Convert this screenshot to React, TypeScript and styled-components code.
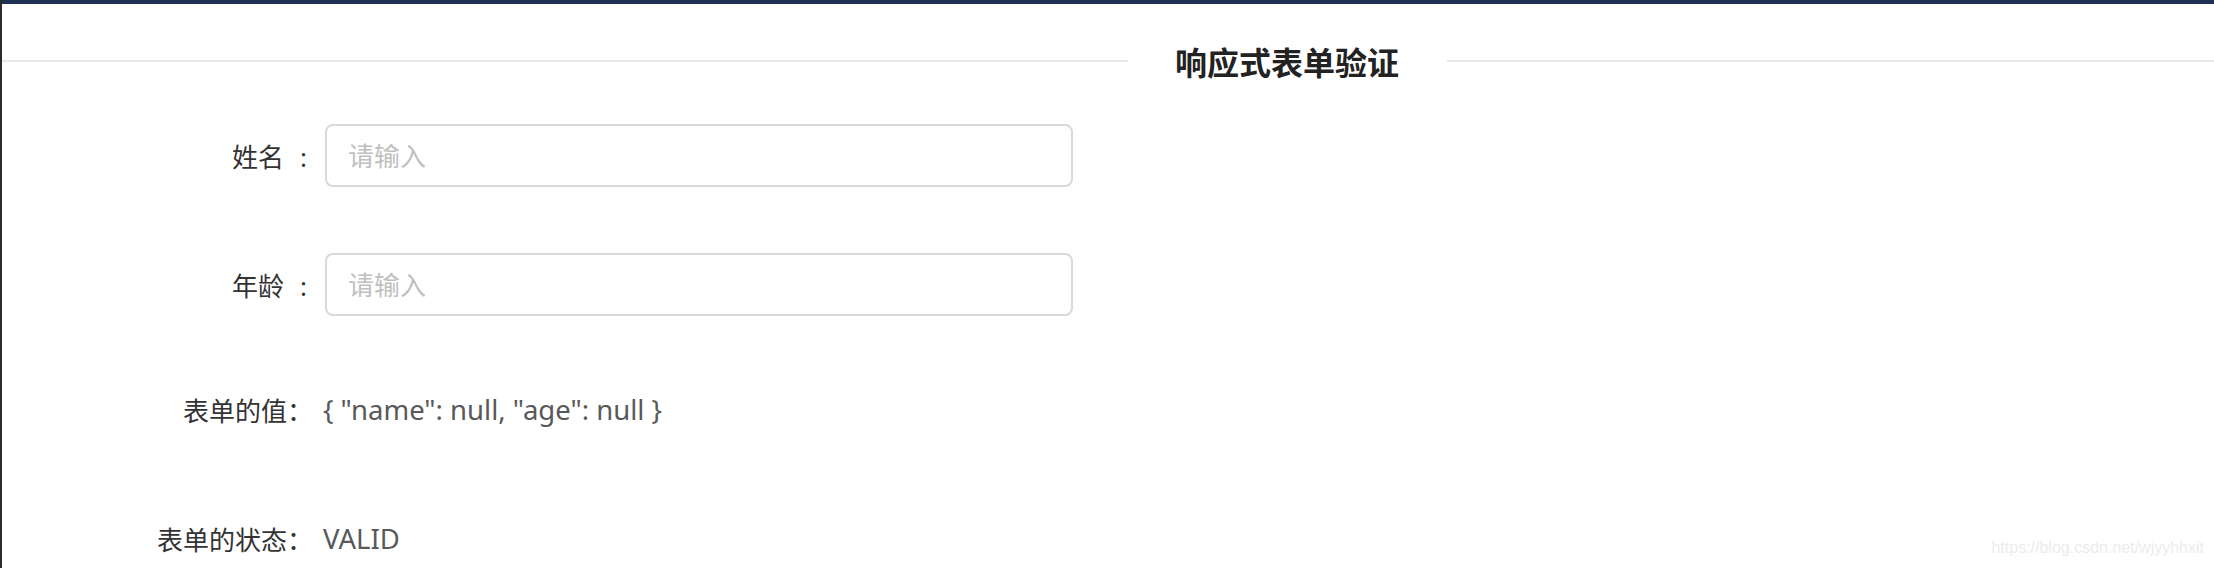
import styled, { createGlobalStyle } from "styled-components";

const GlobalStyle = createGlobalStyle`
  html, body {
    margin: 0;
    padding: 0;
    background: #fff;
  }
  body {
    font-family: "Noto Sans", "Noto Sans CJK SC", sans-serif;
    overflow: hidden;
  }
`;

export default function App() {
  return (
    <>
      <GlobalStyle />
      <Page>
        <TopBar />
        <Heading>
          <Rule />
          <Title>响应式表单验证</Title>
          <Rule $grow />
        </Heading>

        <Form>
          <FormItem $label={305} $gap={18}>
            <Label $colon>姓名</Label>
            <Input placeholder="请输入" />
          </FormItem>
          <FormItem $label={305} $gap={18}>
            <Label $colon>年龄</Label>
            <Input placeholder="请输入" />
          </FormItem>
          <FormItem $label={311} $gap={10} $offset={-4}>
            <Label>表单的值：</Label>
            <Value>{'{ "name": null, "age": null }'}</Value>
          </FormItem>
          <FormItem $label={311} $gap={10}>
            <Label>表单的状态：</Label>
            <Value>VALID</Value>
          </FormItem>
        </Form>

        <Watermark>https://blog.csdn.net/wjyyhhxit</Watermark>
      </Page>
    </>
  );
}

const Page = styled.div`
  position: relative;
  height: 100vh;
  box-sizing: border-box;
  border-left: 2px solid #2b2b2b;
`;

const TopBar = styled.div`
  height: 4px;
  background: #1f3152;
`;

const Heading = styled.div`
  display: flex;
  align-items: center;
  height: 114px;
`;

const Rule = styled.div<{ $grow?: boolean }>`
  height: 2px;
  background: #e8e8e8;
  flex: ${p => (p.$grow ? "1" : "0 0 1126px")};
`;

const Title = styled.h2`
  margin: 0;
  padding: 0 48px 0 47px;
  font-family: "Noto Sans CJK SC", sans-serif;
  font-size: 32px;
  font-weight: 700;
  line-height: 1;
  color: #222;
  white-space: nowrap;
`;

const Form = styled.form`
  display: flex;
  flex-direction: column;
  gap: 66px;
  padding-top: 6px;
`;

const FormItem = styled.div<{ $label: number; $gap: number; $offset?: number }>`
  display: grid;
  grid-template-columns: ${p => p.$label}px auto;
  justify-content: start;
  align-items: center;
  column-gap: ${p => p.$gap}px;
  height: 63px;
  margin-top: ${p => p.$offset ?? 0}px;
`;

const Label = styled.label<{ $colon?: boolean }>`
  text-align: right;
  font-size: 26px;
  color: #333;
  white-space: nowrap;

  &::after {
    content: ${p => (p.$colon ? '":"' : "none")};
    margin-left: 16px;
  }
`;

const Input = styled.input`
  width: 748px;
  height: 63px;
  box-sizing: border-box;
  border: 2px solid #d9d9d9;
  border-radius: 8px;
  padding: 0 21px;
  font-family: inherit;
  font-size: 26px;
  color: #333;
  outline: none;

  &::placeholder {
    color: #bfbfbf;
  }
`;

const Value = styled.span`
  font-size: 27.5px;
  color: #595959;
  white-space: nowrap;
`;

const Watermark = styled.div`
  position: absolute;
  right: 10px;
  top: 538px;
  font-family: "Liberation Sans", Arial, sans-serif;
  font-size: 16px;
  line-height: 20px;
  color: #ececec;
`;
